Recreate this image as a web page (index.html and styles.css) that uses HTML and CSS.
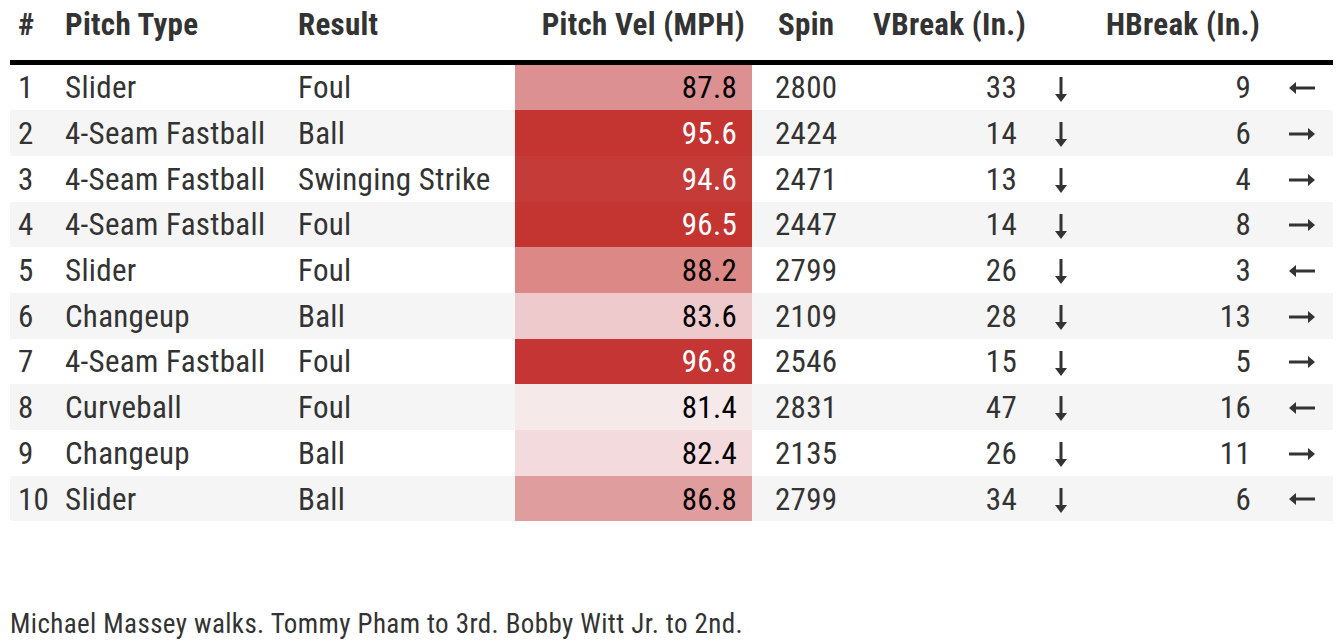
FILE: index.html
```html
<!DOCTYPE html>
<html>
<head>
<meta charset="utf-8">
<link rel="stylesheet" href="styles.css">
</head>
<body>
<div class="page">
<table class="pitches">
  <colgroup>
    <col class="c-num"><col class="c-type"><col class="c-res"><col class="c-vel"><col class="c-spin"><col class="c-vb"><col class="c-va"><col class="c-hb"><col class="c-ha">
  </colgroup>
  <thead>
    <tr>
      <th class="h-num">#</th>
      <th class="h-type">Pitch Type</th>
      <th class="h-res">Result</th>
      <th class="h-vel">Pitch Vel (MPH)</th>
      <th class="h-spin">Spin</th>
      <th class="h-vb" colspan="2">VBreak (In.)</th>
      <th class="h-hb" colspan="2">HBreak (In.)</th>
    </tr>
  </thead>
  <tbody>
    <tr><td class="num">1</td><td class="type">Slider</td><td class="res">Foul</td><td class="vel" style="background:#dd9091">87.8</td><td class="spin">2800</td><td class="vb">33</td><td class="arr"><svg class="ico-down" viewBox="0 0 12 25"><rect x="4.5" y="0" width="3" height="19"/><polygon points="0,17 6,25 12,17"/></svg></td><td class="hb">9</td><td class="arr-h"><svg class="ico-left" viewBox="0 0 26 12"><rect x="6" y="4.5" width="20" height="3"/><polygon points="7,0 0,6 7,12"/></svg></td></tr>
    <tr><td class="num">2</td><td class="type">4-Seam Fastball</td><td class="res">Ball</td><td class="vel light" style="background:#c43532">95.6</td><td class="spin">2424</td><td class="vb">14</td><td class="arr"><svg class="ico-down" viewBox="0 0 12 25"><rect x="4.5" y="0" width="3" height="19"/><polygon points="0,17 6,25 12,17"/></svg></td><td class="hb">6</td><td class="arr-h"><svg class="ico-right" viewBox="0 0 26 12"><rect x="0" y="4.5" width="20" height="3"/><polygon points="19,0 26,6 19,12"/></svg></td></tr>
    <tr><td class="num">3</td><td class="type">4-Seam Fastball</td><td class="res">Swinging Strike</td><td class="vel light" style="background:#c53b38">94.6</td><td class="spin">2471</td><td class="vb">13</td><td class="arr"><svg class="ico-down" viewBox="0 0 12 25"><rect x="4.5" y="0" width="3" height="19"/><polygon points="0,17 6,25 12,17"/></svg></td><td class="hb">4</td><td class="arr-h"><svg class="ico-right" viewBox="0 0 26 12"><rect x="0" y="4.5" width="20" height="3"/><polygon points="19,0 26,6 19,12"/></svg></td></tr>
    <tr><td class="num">4</td><td class="type">4-Seam Fastball</td><td class="res">Foul</td><td class="vel light" style="background:#c43532">96.5</td><td class="spin">2447</td><td class="vb">14</td><td class="arr"><svg class="ico-down" viewBox="0 0 12 25"><rect x="4.5" y="0" width="3" height="19"/><polygon points="0,17 6,25 12,17"/></svg></td><td class="hb">8</td><td class="arr-h"><svg class="ico-right" viewBox="0 0 26 12"><rect x="0" y="4.5" width="20" height="3"/><polygon points="19,0 26,6 19,12"/></svg></td></tr>
    <tr><td class="num">5</td><td class="type">Slider</td><td class="res">Foul</td><td class="vel" style="background:#dc8887">88.2</td><td class="spin">2799</td><td class="vb">26</td><td class="arr"><svg class="ico-down" viewBox="0 0 12 25"><rect x="4.5" y="0" width="3" height="19"/><polygon points="0,17 6,25 12,17"/></svg></td><td class="hb">3</td><td class="arr-h"><svg class="ico-left" viewBox="0 0 26 12"><rect x="6" y="4.5" width="20" height="3"/><polygon points="7,0 0,6 7,12"/></svg></td></tr>
    <tr><td class="num">6</td><td class="type">Changeup</td><td class="res">Ball</td><td class="vel" style="background:#efcacd">83.6</td><td class="spin">2109</td><td class="vb">28</td><td class="arr"><svg class="ico-down" viewBox="0 0 12 25"><rect x="4.5" y="0" width="3" height="19"/><polygon points="0,17 6,25 12,17"/></svg></td><td class="hb">13</td><td class="arr-h"><svg class="ico-right" viewBox="0 0 26 12"><rect x="0" y="4.5" width="20" height="3"/><polygon points="19,0 26,6 19,12"/></svg></td></tr>
    <tr><td class="num">7</td><td class="type">4-Seam Fastball</td><td class="res">Foul</td><td class="vel light" style="background:#c43533">96.8</td><td class="spin">2546</td><td class="vb">15</td><td class="arr"><svg class="ico-down" viewBox="0 0 12 25"><rect x="4.5" y="0" width="3" height="19"/><polygon points="0,17 6,25 12,17"/></svg></td><td class="hb">5</td><td class="arr-h"><svg class="ico-right" viewBox="0 0 26 12"><rect x="0" y="4.5" width="20" height="3"/><polygon points="19,0 26,6 19,12"/></svg></td></tr>
    <tr><td class="num">8</td><td class="type">Curveball</td><td class="res">Foul</td><td class="vel" style="background:#f6e9ea">81.4</td><td class="spin">2831</td><td class="vb">47</td><td class="arr"><svg class="ico-down" viewBox="0 0 12 25"><rect x="4.5" y="0" width="3" height="19"/><polygon points="0,17 6,25 12,17"/></svg></td><td class="hb">16</td><td class="arr-h"><svg class="ico-left" viewBox="0 0 26 12"><rect x="6" y="4.5" width="20" height="3"/><polygon points="7,0 0,6 7,12"/></svg></td></tr>
    <tr><td class="num">9</td><td class="type">Changeup</td><td class="res">Ball</td><td class="vel" style="background:#f3dadc">82.4</td><td class="spin">2135</td><td class="vb">26</td><td class="arr"><svg class="ico-down" viewBox="0 0 12 25"><rect x="4.5" y="0" width="3" height="19"/><polygon points="0,17 6,25 12,17"/></svg></td><td class="hb">11</td><td class="arr-h"><svg class="ico-right" viewBox="0 0 26 12"><rect x="0" y="4.5" width="20" height="3"/><polygon points="19,0 26,6 19,12"/></svg></td></tr>
    <tr><td class="num">10</td><td class="type">Slider</td><td class="res">Ball</td><td class="vel" style="background:#e09d9e">86.8</td><td class="spin">2799</td><td class="vb">34</td><td class="arr"><svg class="ico-down" viewBox="0 0 12 25"><rect x="4.5" y="0" width="3" height="19"/><polygon points="0,17 6,25 12,17"/></svg></td><td class="hb">6</td><td class="arr-h"><svg class="ico-left" viewBox="0 0 26 12"><rect x="6" y="4.5" width="20" height="3"/><polygon points="7,0 0,6 7,12"/></svg></td></tr>
  </tbody>
</table>
<p class="caption">Michael Massey walks. Tommy Pham to 3rd. Bobby Witt Jr. to 2nd.</p>
</div>
</body>
</html>
```
FILE: styles.css
```css
html, body {
  margin: 0;
  padding: 0;
  background: #ffffff;
}
body {
  font-family: "Roboto Condensed", "Roboto", "Liberation Sans Narrow", sans-serif;
  font-stretch: 75%;
  color: #333333;
}
.page {
  padding: 0 7px 0 10px;
}
.pitches {
  border-collapse: collapse;
  table-layout: fixed;
  width: 1323px;
  font-size: 31px;
  letter-spacing: 0.3px;
}
.c-num { width: 48px; }
.c-type { width: 233px; }
.c-res { width: 224px; }
.c-vel { width: 237px; }
.c-spin { width: 93px; }
.c-vb { width: 187px; }
.c-va { width: 58px; }
.c-hb { width: 176px; }
.c-ha { width: 67px; }

.pitches th {
  font-weight: 700;
  height: 62px;
  padding: 0 0 10px 0;
  box-sizing: border-box;
  border-bottom: 5px solid #000000;
  white-space: nowrap;
  vertical-align: middle;
  line-height: 34px;
}
.h-num, .h-type, .h-res, .h-spin { text-align: left; }
.h-num { padding-left: 8px !important; }
.h-type, .h-res { padding-left: 7px !important; }
.h-vel { text-align: right; padding-right: 7px !important; }
.h-spin { padding-left: 26px !important; }
.h-vb { text-align: left; padding-left: 28px !important; }
.h-hb { text-align: left; padding-left: 16px !important; }

.pitches td {
  height: 43.7px;
  box-sizing: content-box;
  padding: 2px 0 0 0;
  line-height: 34px;
  white-space: nowrap;
  vertical-align: middle;
}
.pitches tbody tr:nth-child(even) td {
  background: #f5f5f5;
}
.num { padding-left: 8px !important; }
.type, .res { padding-left: 7px !important; }
.pitches td.vel {
  text-align: right;
  padding-right: 15px;
  color: #000000;
}
.pitches td.vel.light { color: #ffffff; }
.spin { padding-left: 23px !important; }
.vb, .hb { text-align: right; padding-right: 15px !important; }
.arr {
  text-align: center;
}
.arr-h {
  text-align: left;
  padding-left: 23px !important;
}
.ico-down {
  display: inline-block;
  width: 12px;
  height: 25px;
  fill: #333333;
  vertical-align: middle;
  position: relative;
  top: -1px;
}
.ico-left, .ico-right {
  display: inline-block;
  width: 26px;
  height: 12px;
  fill: #333333;
  vertical-align: middle;
  position: relative;
  top: -2px;
}

.caption {
  margin: 88px 0 0 0;
  font-size: 27px;
  letter-spacing: 0.4px;
  line-height: 30px;
  color: #333333;
}
```
